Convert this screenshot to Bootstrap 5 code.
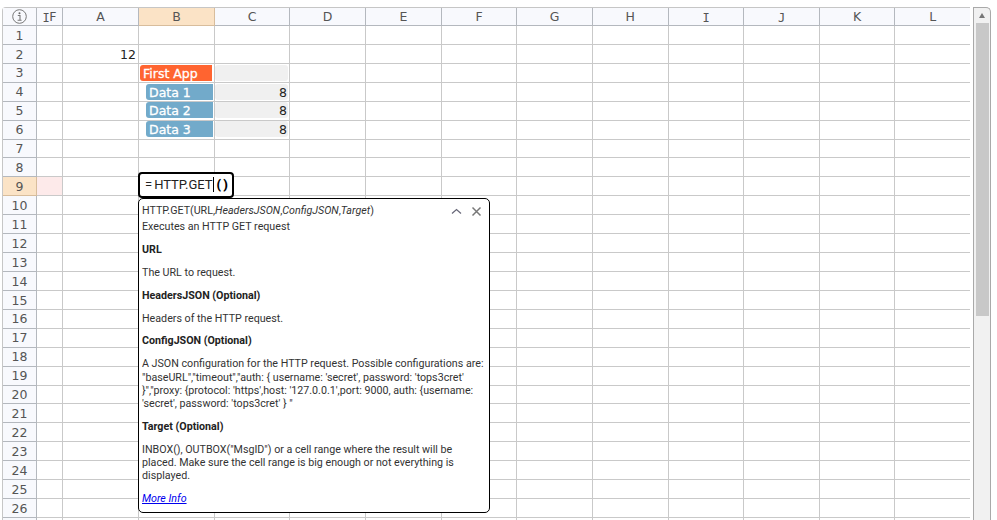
<!DOCTYPE html>
<html lang="en">
<head>
<meta charset="UTF-8">
<title>Spreadsheet</title>
<link href="https://cdn.jsdelivr.net/npm/bootstrap@5.3.3/dist/css/bootstrap.min.css" rel="stylesheet">
<style>
    body { background: #fff; overflow: hidden; font-family: "DejaVu Sans", sans-serif; }
    .sheet-wrap { padding: 7px 0 0 2px; gap: 3px; height: 520px; }
    .sheet-area { position: relative; width: 968px; height: 513px; overflow: hidden; }
    .sheet-grid {
        display: grid;
        grid-template-columns: 34px 26px 76px 76px 75px 76px 76px 75.4px 75.6px 75.6px 75.6px 75.6px 75.6px 75.6px;
        grid-template-rows: 18px repeat(27, 18.93px);
        border-left: 1px solid #c6c6c6;
        border-top: 1px solid #c6c6c6;
        border-top-left-radius: 4px;
    }
    .sheet-cell { border-right: 1px solid #c9c9c9; border-bottom: 1px solid #c9c9c9; font-size: 12.5px; color: #333; overflow: hidden; }
    .sheet-head {
        background: #f8f9fd; border-color: #b4b8be; color: #555; padding-top: 2px;
        display: flex; align-items: center; justify-content: center;
    }
    .sheet-head i { font-family: "DejaVu Sans Mono", monospace; font-style: normal; font-size: 12px; letter-spacing: -.4px; }
    .sheet-active { background: #fbe3c6; border-color: #d8bd9c; }
    .sheet-pink { background: #fdeaea; }
    .sheet-num { display: flex; align-items: center; justify-content: flex-end; padding: 2px 2px 0 0; color: #222; }
    .info-ic { width: 15px; height: 15px; margin-top: -2px; }
    .app-box {
        position: absolute; border-radius: 3px 0 0 3px; color: #fff; font-size: 12.5px; line-height: 17px;
        -webkit-text-stroke: .3px #fff;
    }
    .app-title { left: 138px; top: 58px; width: 72px; height: 16px; padding-left: 3px; background: #ff6430; }
    .app-data { left: 144px; width: 67px; height: 16px; padding-left: 3px; background: #72aaca; }
    .app-val { position: absolute; left: 213px; width: 73px; height: 16px; background: #f0f0f0; border-radius: 3px; font-size: 12.5px; color: #222; text-align: right; padding-right: 1px; line-height: 18px; }
    .cell-editor {
        position: absolute; left: 136px; top: 165px; width: 96px; height: 26px;
        border: 2px solid #000; border-radius: 4px; background: #fff;
        font-family: Roboto, sans-serif; font-size: 13px; padding-left: 5px; line-height: 22px; color: #222;
    }
    .cell-editor em { font-style: normal; margin-right: 2px; }
    .cell-editor b { font-weight: 900; letter-spacing: 2px; margin-left: 3px; color: #000; }
    .caret-bar { border-left: 1px solid #000; }
    .help-pop {
        position: absolute; left: 136px; top: 191px; width: 352px; height: 315px;
        border: 1px solid #000; border-radius: 5px; background: #fff;
        font-family: Roboto, sans-serif; font-size: 10.7px; line-height: 13.25px; color: #333;
        padding: 5px 3px 0 3px;
    }
    .help-pop p { margin: 0 0 9.65px; }
    .help-pop .pop-sig { margin: 0 0 2.7px; }
    .help-pop strong { font-weight: 700; color: #222; }
    .help-pop a { color: #00e; font-style: italic; }
    .pop-tools { position: absolute; top: 7px; right: 7px; gap: 9px; }
    .scroll-bar { width: 18px; height: 513px; border: 1px solid #a9a9a9; border-bottom: 0; background: #f1f1f1; border-top-right-radius: 5px; }
    .scroll-up { height: 15px; display: flex; align-items: center; justify-content: center; }
    .scroll-thumb { height: 293px; margin: 0 1px 0 2px; background: #c8c8c8; }
</style>
</head>
<body>
<div class="d-flex sheet-wrap">
    <div class="sheet-area">
        <div class="sheet-grid" id="grid"></div>

        <div class="app-box app-title">First App</div>
        <div class="app-val" style="top:58px"></div>
        <div class="app-box app-data" style="top:77px">Data 1</div>
        <div class="app-val" style="top:77px">8</div>
        <div class="app-box app-data" style="top:95px">Data 2</div>
        <div class="app-val" style="top:95px">8</div>
        <div class="app-box app-data" style="top:114px">Data 3</div>
        <div class="app-val" style="top:114px">8</div>

        <div class="cell-editor"><em>=</em>HTTP.GET<span class="caret-bar"></span><b>()</b></div>

        <div class="help-pop">
            <div class="d-flex pop-tools">
                <svg width="11" height="11" viewBox="0 0 11 11" fill="none" stroke="#667" stroke-width="1.2"><path d="M1 7.5 5.5 3.5 10 7.5"/></svg>
                <svg width="11" height="11" viewBox="0 0 11 11" fill="none" stroke="#777" stroke-width="1.5"><path d="M1.5 1.5 9.5 9.5M9.5 1.5 1.5 9.5"/></svg>
            </div>
            <p class="pop-sig">HTTP.GET(URL,<i>HeadersJSON</i>,<i>ConfigJSON</i>,<i>Target</i>)</p>
            <p>Executes an HTTP GET request</p>
            <p><strong>URL</strong></p>
            <p>The URL to request.</p>
            <p><strong>HeadersJSON (Optional)</strong></p>
            <p>Headers of the HTTP request.</p>
            <p><strong>ConfigJSON (Optional)</strong></p>
            <p>A JSON configuration for the HTTP request. Possible configurations are: "baseURL","timeout","auth: { username: 'secret', password: 'tops3cret' }","proxy: {protocol: 'https',host: '127.0.0.1',port: 9000, auth: {username: 'secret', password: 'tops3cret' } "</p>
            <p><strong>Target (Optional)</strong></p>
            <p>INBOX(), OUTBOX("MsgID") or a cell range where the result will be placed. Make sure the cell range is big enough or not everything is displayed.</p>
            <p><a href="#">More Info</a></p>
        </div>
    </div>
    <div class="scroll-bar">
        <div class="scroll-up"><svg width="6" height="5" viewBox="0 0 6 5"><path d="M3 0 6 5H0Z" fill="#777"/></svg></div>
        <div class="scroll-thumb"></div>
    </div>
</div>
<script>
    // header + rows of the sheet, the app cells sit on top
    var cols = ['', '<i>I</i>F', 'A', 'B', 'C', 'D', 'E', 'F', 'G', 'H', '<i>I</i>', '<i>J</i>', 'K', 'L'];
    var html = '';
    cols.forEach(function (c, i) {
        if (i === 0) {
            html += '<div class="sheet-cell sheet-head"><svg class="info-ic" viewBox="0 0 15 15" fill="none" stroke="#777"><circle cx="7.5" cy="7.5" r="6.8"/><path d="M5.8 6.5h2.2v4.5M5.6 11.2h4" stroke-width="1.1"/><circle cx="7.5" cy="4.2" r="1" fill="#666" stroke="none"/></svg></div>';
        } else {
            html += '<div class="sheet-cell sheet-head' + (c === 'B' ? ' sheet-active' : '') + '">' + c + '</div>';
        }
    });
    for (var r = 1; r <= 27; r++) {
        html += '<div class="sheet-cell sheet-head' + (r === 9 ? ' sheet-active' : '') + '">' + (r < 27 ? r : '') + '</div>';
        for (var k = 1; k < cols.length; k++) {
            var cls = 'sheet-cell';
            var txt = '';
            if (r === 9 && k === 1) cls += ' sheet-pink';
            if (r === 2 && k === 2) { cls += ' sheet-num'; txt = '12'; }
            html += '<div class="' + cls + '">' + txt + '</div>';
        }
    }
    document.getElementById('grid').innerHTML = html;
</script>
<script src="https://cdn.jsdelivr.net/npm/bootstrap@5.3.3/dist/js/bootstrap.bundle.min.js"></script>
</body>
</html>
